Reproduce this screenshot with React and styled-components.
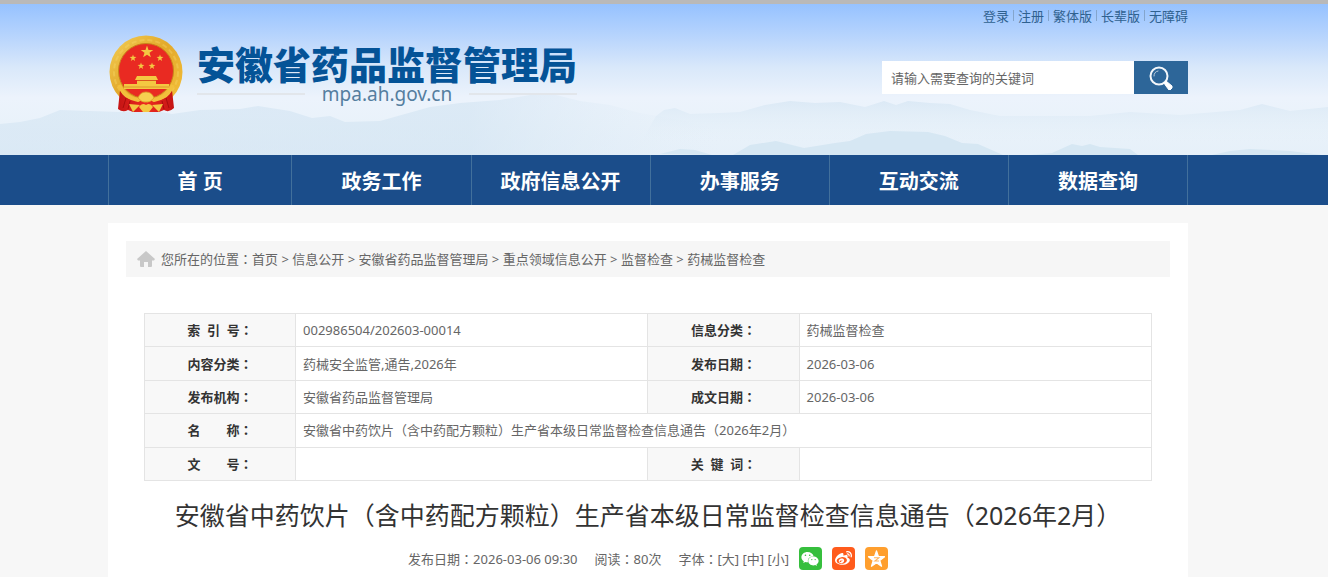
import React, { useState } from 'react';
import styled, { createGlobalStyle } from 'styled-components';
import { FaWeixin, FaWeibo } from 'react-icons/fa';

const topLinks = ['登录', '注册', '繁体版', '长辈版', '无障碍'];

const navItems = ['首 页', '政务工作', '政府信息公开', '办事服务', '互动交流', '数据查询'];

const crumbs = [
  '首页',
  '信息公开',
  '安徽省药品监督管理局',
  '重点领域信息公开',
  '监督检查',
  '药械监督检查',
];

const infoRows = [
  [
    ['索\u00a0\u00a0引\u00a0\u00a0号', '002986504/202603-00014'],
    ['信息分类', '药械监督检查'],
  ],
  [
    ['内容分类', '药械安全监管,通告,2026年'],
    ['发布日期', '2026-03-06'],
  ],
  [
    ['发布机构', '安徽省药品监督管理局'],
    ['成文日期', '2026-03-06'],
  ],
  [['名\u3000\u3000称', '安徽省中药饮片（含中药配方颗粒）生产省本级日常监督检查信息通告（2026年2月）']],
  [
    ['文\u3000\u3000号', ''],
    ['关\u00a0\u00a0键\u00a0\u00a0词', ''],
  ],
];

const STAR = 'M0 -10 L2.3 -3.2 L9.5 -3.1 L3.8 1.2 L5.9 8.1 L0 4 L-5.9 8.1 L-3.8 1.2 L-9.5 -3.1 L-2.3 -3.2Z';

function Emblem() {
  return (
    <svg width='74' height='78' viewBox='0 0 74 78' aria-hidden='true'>
      <defs>
        <linearGradient id='gold' x1='0' y1='0' x2='1' y2='1'>
          <stop offset='0' stopColor='#f3cf56' />
          <stop offset='0.45' stopColor='#e3a92b' />
          <stop offset='1' stopColor='#f5c13a' />
        </linearGradient>
        <linearGradient id='drape' x1='0' y1='0' x2='1' y2='0'>
          <stop offset='0' stopColor='#c41414' />
          <stop offset='0.5' stopColor='#ee2a20' />
          <stop offset='1' stopColor='#c41414' />
        </linearGradient>
      </defs>
      <circle cx='37' cy='37' r='36.5' fill='url(#gold)' />
      <circle cx='37' cy='37' r='32' fill='none' stroke='#f9dc6c' strokeWidth='2' strokeDasharray='5 3' opacity='0.35' />
      <circle cx='37' cy='36' r='27.5' fill='#e92a22' stroke='#c9861b' />
      <path d='M11 55 Q14 63 24 65 L37 62 L50 65 Q60 63 63 55 L65 73 Q60 78 55 75 L50 77 H24 L19 75 Q14 78 9 74Z' fill='url(#drape)' />
      <path d='M14 73 L17 63 M60 73 L57 63 M19 74 L21 66 M55 74 L53 66' stroke='#a90d0d' fill='none' />
      <path d='M10 50 Q16 63 29 65 L37 60 L45 65 Q58 63 64 50' fill='none' stroke='#f2c03c' strokeWidth='4' />
      <path d='M29 63 Q31 57 37 57 Q43 57 45 63 Q41 68 37 67 Q33 68 29 63Z' fill='#f6cf50' stroke='#dc9f26' strokeWidth='.8' />
      <path d='M20 69 L31 70 L24 77Z M54 69 L43 70 L50 77Z M30 72 Q33 67 37 70 Q41 67 44 72 L40 77 H34Z' fill='#f4c742' />
      <g fill='#f4c842'>
        <path d={STAR} transform='translate(38 17) scale(.66)' />
        <path d={STAR} transform='translate(24 23) scale(.36)' />
        <path d={STAR} transform='translate(51 23) scale(.36)' />
        <path d={STAR} transform='translate(32 31) scale(.36)' />
        <path d={STAR} transform='translate(43 31) scale(.36)' />
        <path d='M28 41 H47 L49 45 H26Z' />
        <path d='M28 46 H47 V49 H60 V54 H15 V49 H28Z' />
      </g>
      <path d='M28 45.500 H47 M15 52 H60' stroke='#cf7b1c' strokeWidth='.6' />
    </svg>
  );
}

function Mountains() {
  return (
    <Scenery viewBox='0 0 1328 151' preserveAspectRatio='none' aria-hidden='true'>
      <defs>
        <linearGradient id='far' gradientUnits='userSpaceOnUse' x1='0' y1='0' x2='720' y2='0'>
          <stop offset='0' stopColor='#cfe2f1' stopOpacity='0.5' />
          <stop offset='0.65' stopColor='#cfe2f1' stopOpacity='0.55' />
          <stop offset='1' stopColor='#dfebf6' stopOpacity='0' />
        </linearGradient>
        <linearGradient id='fade' x1='0' y1='0' x2='0' y2='1'>
          <stop offset='0' stopColor='#cfe2f1' stopOpacity='0.55' />
          <stop offset='1' stopColor='#e4eff8' stopOpacity='0' />
        </linearGradient>
      </defs>
      <path
        d='M0 120 L20 118 L40 114 L60 106 L90 107 L120 108 L150 106 L172 110 L200 106 L240 105 L258 102 L290 107 L312 114 L330 112 L345 118 L380 117 L405 110 L430 103 L460 99 L500 96 L530 91 L556 91 L580 97 L610 101 L640 109 L680 116 L720 125 V151 H0Z'
        fill='url(#far)'
      />
      <path
        d='M640 140 L656 112 L664 106 L675 104 L690 110 L720 109 L740 108 L765 101 L790 97 L815 99 L840 98 L865 103 L884 97 L896 101 L908 97 L930 99 L950 100 L970 106 L1000 112 L1090 112 L1130 108 L1180 111 L1240 106 L1262 100 L1290 107 L1328 103 L1328 140Z'
        fill='url(#fade)'
      />
      <path
        d='M660 150 L680 145 L695 146 L712 151Z M733 151 L750 141 L776 137 L804 144 L835 139 L850 137 L866 130 L890 127 L928 128 L945 132 L962 139 L978 140 L1003 151Z M1030 151 L1052 149 L1072 140 L1082 142 L1090 140 L1100 143 L1130 145 L1138 151Z M1212 151 L1230 147 L1250 145 L1290 147 L1322 151Z'
        fill='#d6e7f3'
      />
    </Scenery>
  );
}

function SearchIcon() {
  return (
    <svg width='24' height='24' viewBox='0 0 24 24' fill='none' aria-hidden='true'>
      <circle cx='10' cy='10' r='8.500' stroke='#f4f7fa' strokeWidth='2' />
      <path d='M5 10 A5 5 0 0 1 9 5' stroke='#b9cbdc' strokeLinecap='round' />
      <path d='M15 17 L17 15 L23 20 V22 L21 24 H20 L17 20Z' fill='#fff' stroke='#fff' strokeLinejoin='round' />
    </svg>
  );
}

function App() {
  const [keyword, setKeyword] = useState('');

  return (
    <>
      <GlobalStyle />
      <Header>
        <Mountains />
        <Wrap>
          <TopLinks>
            {topLinks.map((text) => (
              <a href='#' key={text}>
                {text}
              </a>
            ))}
          </TopLinks>
          <Banner>
            <Logo href='#'>
              <Emblem />
              <LogoText>
                <h1>安徽省药品监督管理局</h1>
                <Domain>mpa.ah.gov.cn</Domain>
              </LogoText>
            </Logo>
            <SearchForm onSubmit={(e) => e.preventDefault()}>
              <input
                type='text'
                aria-label='搜索'
                placeholder='请输入需要查询的关键词'
                value={keyword}
                onChange={(e) => setKeyword(e.target.value)}
              />
              <button type='submit' aria-label='搜索'>
                <SearchIcon />
              </button>
            </SearchForm>
          </Banner>
        </Wrap>
      </Header>

      <NavBar>
        <NavList>
          {navItems.map((text) => (
            <a href='#' key={text}>
              {text}
            </a>
          ))}
        </NavList>
      </NavBar>

      <Main>
        <Content>
          <Breadcrumb>
            <svg width='18' height='16' viewBox='0 0 18 16' fill='#c8c8c8' aria-hidden='true'>
              <path d='M9 0 L18 8 L17 9.500 H15 V15 Q15 16 14 16 H11 V11 H7 V16 H4 Q3 16 3 15 V9.500 H1 L0 8Z' />
            </svg>
            <span>
              您所在的位置<Colon>：</Colon>
              {crumbs.map((text, i) => (
                <React.Fragment key={text}>
                  {i > 0 && ' > '}
                  <a href='#'>{text}</a>
                </React.Fragment>
              ))}
            </span>
          </Breadcrumb>

          <Article>
            <InfoTable>
              <colgroup>
                <col width='15%' />
                <col width='35%' />
                <col width='15%' />
                <col width='35%' />
              </colgroup>
              <tbody>
                {infoRows.map((row) => (
                  <tr key={row[0][0]}>
                    {row.map(([label, value]) => (
                      <React.Fragment key={label}>
                        <th scope='row'>
                          {label}
                          <Colon>：</Colon>
                        </th>
                        <td colSpan={row.length === 1 ? 3 : 1}>{value}</td>
                      </React.Fragment>
                    ))}
                  </tr>
                ))}
              </tbody>
            </InfoTable>

            <Title>安徽省中药饮片（含中药配方颗粒）生产省本级日常监督检查信息通告（2026年2月）</Title>

            <Meta>
              <span>
                发布日期<Colon>：</Colon>2026-03-06 09:30
              </span>
              <span>
                阅读<Colon>：</Colon>80次
              </span>
              <SizeAndShare>
                <span>
                  字体<Colon>：</Colon>
                  <button type='button'>[大]</button> <button type='button'>[中]</button>{' '}
                  <button type='button'>[小]</button>
                </span>
                <ShareLink href='#' aria-label='微信' $color='#36bf3d'>
                  <FaWeixin size={18} />
                </ShareLink>
                <ShareLink href='#' aria-label='微博' $color='#ff5b1c'>
                  <FaWeibo size={17} />
                </ShareLink>
                <ShareLink href='#' aria-label='QQ空间' $color='#ff9f2e'>
                  <svg width='17' height='17' viewBox='-10 -11 20 20' aria-hidden='true'>
                    <path d={STAR} fill='#fff' stroke='#fff' strokeWidth='1.500' strokeLinejoin='round' />
                    <path d='M-3 -2 H3 L-2 2 H3' fill='none' stroke='#ffb45c' strokeWidth='1.200' />
                  </svg>
                </ShareLink>
              </SizeAndShare>
            </Meta>
          </Article>
        </Content>
      </Main>
    </>
  );
}

export default App;

const GlobalStyle = createGlobalStyle`
  * {
    box-sizing: border-box;
  }

  body {
    margin: 0;
    overflow-x: hidden;
    background: #f7f7f7;
    color: #666;
    font-family: 'Noto Sans', 'Noto Sans CJK SC', sans-serif;
    font-size: 13px;
    line-height: 20px;
  }

  a {
    color: inherit;
    text-decoration: none;
  }

  h1,
  h2 {
    margin: 0;
  }

  button,
  input {
    padding: 0;
    border: 0;
    font: inherit;
    color: inherit;
  }

  button {
    background: none;
    cursor: pointer;
  }
`;

const Header = styled.header`
  position: relative;
  padding-right: 32px;
  border-top: 4px solid #b9b9b9;
  background: linear-gradient(#96c2ff, #b5d3fd 20%, #d9e8fa 42%, #ecf3fc 62%, #e9f2fa 80%, #e6f0f9);
`;

const Scenery = styled.svg`
  position: absolute;
  inset: 0;
  width: 100%;
  height: 100%;
`;

const Wrap = styled.div`
  position: relative;
  max-width: 1080px;
  margin: 0 auto;
`;

const TopLinks = styled.div`
  display: flex;
  justify-content: flex-end;
  align-items: center;
  padding-top: 2px;
  color: #2f618f;

  a + a::before {
    content: '';
    display: inline-block;
    width: 1px;
    height: 11px;
    margin: 0 4px;
    background: #84a5cc;
  }
`;

const Banner = styled.div`
  display: flex;
  justify-content: space-between;
  align-items: flex-start;
  padding: 9px 0 42px;
`;

const Logo = styled.a`
  display: flex;
  gap: 14px;
  padding-left: 1px;

  svg {
    flex: none;
  }
`;

const LogoText = styled.div`
  padding-top: 9px;

  h1 {
    color: #045397;
    font-size: 38px;
    font-weight: 900;
    line-height: 40px;
    white-space: nowrap;
  }
`;

const Domain = styled.div`
  display: flex;
  align-items: center;
  gap: 17px;
  color: #557e9f;
  font-size: 19px;
  line-height: 20px;

  &::before,
  &::after {
    content: '';
    flex: 1;
    height: 2px;
    background: #e2e6eb;
  }
`;

const SearchForm = styled.form`
  display: flex;
  width: 306px;
  height: 33px;
  margin-top: 26px;

  input {
    flex: 1;
    min-width: 0;
    padding: 0 9px;
    background: #fff;
    outline: none;
  }

  input::placeholder {
    color: #666;
    opacity: 1;
  }

  button {
    display: flex;
    justify-content: center;
    align-items: center;
    width: 54px;
    background: #2d6699;
  }
`;

const NavBar = styled.nav`
  padding-right: 32px;
  background: #1b4d8a;
`;

const NavList = styled.div`
  display: flex;
  max-width: 1080px;
  margin: 0 auto;
  border-right: 1px solid #42709c;

  a {
    flex: 1;
    padding-top: 4px;
    border-left: 1px solid #42709c;
    color: #fff;
    font-size: 20px;
    font-weight: bold;
    line-height: 46px;
    text-align: center;
    white-space: nowrap;
  }

  a:first-child {
    flex: 0 0 17%;
  }
`;

const Main = styled.main`
  padding: 18px 32px 0 0;
`;

const Content = styled.div`
  max-width: 1080px;
  margin: 0 auto;
  padding: 18px;
  background: #fff;
`;

const Breadcrumb = styled.div`
  display: flex;
  align-items: center;
  gap: 6px;
  padding: 8px 11px;
  background: #f6f6f6;
`;

// centred full-width colon
const Colon = styled.span`
  font-family: 'Noto Sans CJK TC', sans-serif;
`;

const Article = styled.article`
  padding: 36px 18px 0;
`;

const InfoTable = styled.table`
  width: 100%;
  height: 168px;
  border-collapse: collapse;
  table-layout: fixed;

  th,
  td {
    padding: 0 7px;
    border: 1px solid #e4e4e4;
    text-align: left;
  }

  th {
    background: #f8f8f8;
    color: #333;
    text-align: center;
  }
`;

const Title = styled.h2`
  padding: 16px 0 14px;
  color: #333;
  font-size: 25px;
  font-weight: normal;
  line-height: 36px;
  text-align: center;
`;

const Meta = styled.div`
  display: flex;
  justify-content: center;
  align-items: center;
  gap: 17px;
`;

const SizeAndShare = styled.div`
  display: flex;
  align-items: center;
  gap: 10px;
`;

const ShareLink = styled.a`
  display: flex;
  justify-content: center;
  align-items: center;
  width: 23px;
  height: 23px;
  border-radius: 4px;
  background: ${(props) => props.$color};
  color: #fff;
`;
